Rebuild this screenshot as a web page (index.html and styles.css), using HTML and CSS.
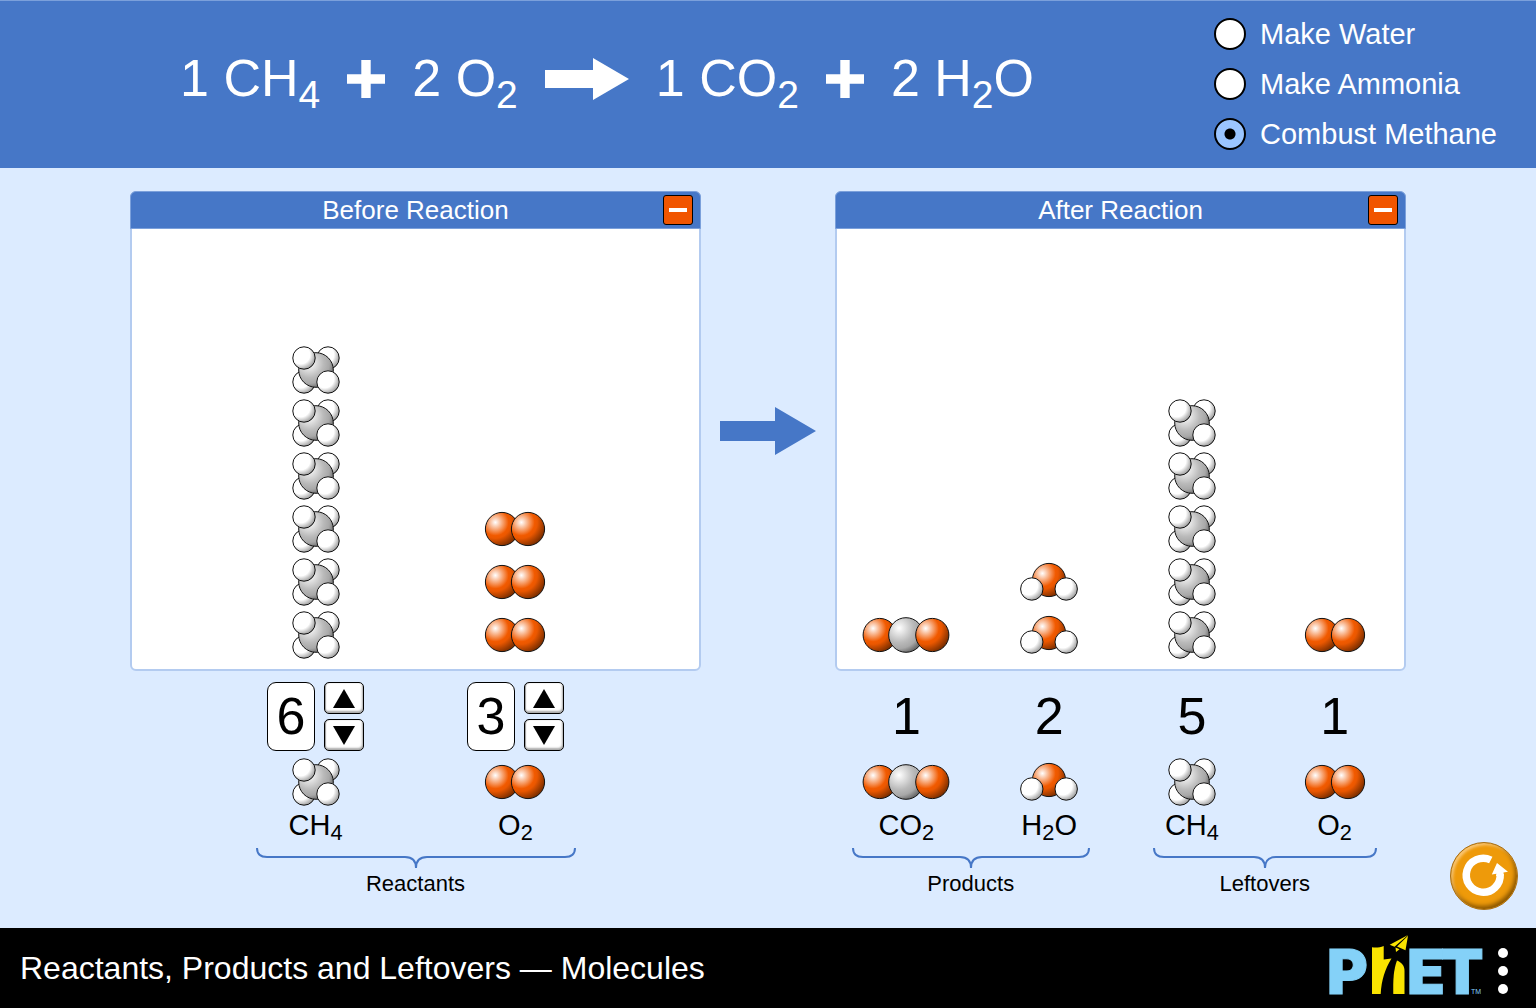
FILE: index.html
```html
<!DOCTYPE html>
<html lang="en">
<head>
<meta charset="utf-8">
<meta name="viewport" content="width=device-width, initial-scale=1">
<title>Reactants, Products and Leftovers — Molecules</title>
<link rel="stylesheet" href="styles.css">
</head>
<body>
<svg class="defs" aria-hidden="true">
  <defs>
    <radialGradient id="oxygen" cx="0.3" cy="0.3" r="0.8">
      <stop offset="0" stop-color="#fff"/>
      <stop offset="0.5" stop-color="#f15a00"/>
      <stop offset="0.6" stop-color="#ea5700"/>
      <stop offset="1" stop-color="#6a2800"/>
    </radialGradient>
    <radialGradient id="carbon" cx="0.3" cy="0.3" r="0.84">
      <stop offset="0" stop-color="#fff"/>
      <stop offset="0.5" stop-color="#bababa"/>
      <stop offset="0.7" stop-color="#a8a8a8"/>
      <stop offset="1" stop-color="#484848"/>
    </radialGradient>
    <radialGradient id="hydrogen" cx="0.35" cy="0.35" r="0.75">
      <stop offset="0" stop-color="#fff"/>
      <stop offset="0.55" stop-color="#fff"/>
      <stop offset="1" stop-color="#888"/>
    </radialGradient>
    <symbol id="ch4" viewBox="-50 -27 100 53">
      <circle class="h" cx="12" cy="-12" r="11.2"/>
      <circle class="h" cx="-12" cy="12" r="11.2"/>
      <circle class="c" r="17.3"/>
      <circle class="h" cx="-12" cy="-12" r="11.2"/>
      <circle class="h" cx="12" cy="12" r="11.2"/>
    </symbol>
    <symbol id="o2" viewBox="-50 -27 100 53">
      <circle class="o" cx="-13" r="16.6"/>
      <circle class="o" cx="13" r="16.6"/>
    </symbol>
    <symbol id="co2" viewBox="-50 -27 100 53">
      <circle class="o" cx="-26.3" r="16.6"/>
      <circle class="c" r="17.3"/>
      <circle class="o" cx="26.3" r="16.6"/>
    </symbol>
    <symbol id="h2o" viewBox="-50 -27 100 53">
      <circle class="o" cy="-2" r="16.6"/>
      <circle class="h" cx="-17.2" cy="7" r="11.2"/>
      <circle class="h" cx="17.2" cy="7" r="11.2"/>
    </symbol>
    <symbol id="plus" viewBox="0 0 38 38">
      <path d="M14.3 0h9.4v14.3H38v9.4H23.7V38h-9.4V23.7H0v-9.4h14.3z"/>
    </symbol>
  </defs>
</svg>

<header class="topbar">
  <div class="equation">
    <span class="term">1 CH<sub>4</sub></span>
    <svg class="plus" role="img" aria-label="plus"><use href="#plus"/></svg>
    <span class="term">2 O<sub>2</sub></span>
    <svg class="yields" viewBox="0 0 84 42" role="img" aria-label="yields"><path d="M0 12h48V0l36 21-36 21V30H0z"/></svg>
    <span class="term">1 CO<sub>2</sub></span>
    <svg class="plus" role="img" aria-label="plus"><use href="#plus"/></svg>
    <span class="term">2 H<sub>2</sub>O</span>
  </div>
  <form class="reactions">
    <label class="reaction"><input type="radio" name="reaction"><span>Make Water</span></label>
    <label class="reaction"><input type="radio" name="reaction"><span>Make Ammonia</span></label>
    <label class="reaction"><input type="radio" name="reaction" checked><span>Combust Methane</span></label>
  </form>
</header>

<main class="stage">
  <div class="board">
    <section class="panel">
      <div class="panel-head">
        <h2>Before Reaction</h2>
        <button class="collapse" type="button" aria-label="Collapse Before Reaction"></button>
      </div>
      <div class="stacks stacks-two">
        <div class="stack">
          <svg class="molecule"><use href="#ch4"/></svg>
          <svg class="molecule"><use href="#ch4"/></svg>
          <svg class="molecule"><use href="#ch4"/></svg>
          <svg class="molecule"><use href="#ch4"/></svg>
          <svg class="molecule"><use href="#ch4"/></svg>
          <svg class="molecule"><use href="#ch4"/></svg>
        </div>
        <div class="stack">
          <svg class="molecule"><use href="#o2"/></svg>
          <svg class="molecule"><use href="#o2"/></svg>
          <svg class="molecule"><use href="#o2"/></svg>
        </div>
      </div>
    </section>

    <svg class="between" viewBox="0 0 96 48" aria-hidden="true"><path d="M0 14h55V0l41 24-41 24V34H0z"/></svg>

    <section class="panel">
      <div class="panel-head">
        <h2>After Reaction</h2>
        <button class="collapse" type="button" aria-label="Collapse After Reaction"></button>
      </div>
      <div class="stacks stacks-four">
        <div class="stack">
          <svg class="molecule"><use href="#co2"/></svg>
        </div>
        <div class="stack">
          <svg class="molecule"><use href="#h2o"/></svg>
          <svg class="molecule"><use href="#h2o"/></svg>
        </div>
        <div class="stack">
          <svg class="molecule"><use href="#ch4"/></svg>
          <svg class="molecule"><use href="#ch4"/></svg>
          <svg class="molecule"><use href="#ch4"/></svg>
          <svg class="molecule"><use href="#ch4"/></svg>
          <svg class="molecule"><use href="#ch4"/></svg>
        </div>
        <div class="stack">
          <svg class="molecule"><use href="#o2"/></svg>
        </div>
      </div>
    </section>

    <div class="ledger">
      <div class="group">
        <div class="items stacks-two">
          <div class="item">
            <div class="stepper">
              <output class="value">6</output>
              <div class="arrows">
                <button type="button" aria-label="Add CH4"><svg viewBox="0 0 22 19"><path d="M11 0l11 19H0z"/></svg></button>
                <button type="button" aria-label="Remove CH4"><svg viewBox="0 0 22 19"><path d="M11 19L0 0h22z"/></svg></button>
              </div>
            </div>
            <svg class="molecule"><use href="#ch4"/></svg>
            <span class="formula">CH<sub>4</sub></span>
          </div>
          <div class="item">
            <div class="stepper">
              <output class="value">3</output>
              <div class="arrows">
                <button type="button" aria-label="Add O2"><svg viewBox="0 0 22 19"><path d="M11 0l11 19H0z"/></svg></button>
                <button type="button" aria-label="Remove O2"><svg viewBox="0 0 22 19"><path d="M11 19L0 0h22z"/></svg></button>
              </div>
            </div>
            <svg class="molecule"><use href="#o2"/></svg>
            <span class="formula">O<sub>2</sub></span>
          </div>
        </div>
        <div class="bracket">
          <svg width="320" height="21" viewBox="0 0 320 21"><path d="M1 0Q1 9 11 9H149Q160 9 160 20Q160 9 171 9H309Q319 9 319 0"/></svg>
          <span>Reactants</span>
        </div>
      </div>
    </div>

    <div class="ledger ledger-after">
      <div class="group">
        <div class="items">
          <div class="item">
            <output class="count">1</output>
            <svg class="molecule"><use href="#co2"/></svg>
            <span class="formula">CO<sub>2</sub></span>
          </div>
          <div class="item">
            <output class="count">2</output>
            <svg class="molecule"><use href="#h2o"/></svg>
            <span class="formula">H<sub>2</sub>O</span>
          </div>
        </div>
        <div class="bracket bracket-products">
          <svg width="238" height="21" viewBox="0 0 238 21"><path d="M1 0Q1 9 11 9H108Q119 9 119 20Q119 9 130 9H227Q237 9 237 0"/></svg>
          <span>Products</span>
        </div>
      </div>
      <div class="group">
        <div class="items">
          <div class="item">
            <output class="count">5</output>
            <svg class="molecule"><use href="#ch4"/></svg>
            <span class="formula">CH<sub>4</sub></span>
          </div>
          <div class="item">
            <output class="count">1</output>
            <svg class="molecule"><use href="#o2"/></svg>
            <span class="formula">O<sub>2</sub></span>
          </div>
        </div>
        <div class="bracket bracket-leftovers">
          <svg width="224" height="21" viewBox="0 0 224 21"><path d="M1 0Q1 9 11 9H101Q112 9 112 20Q112 9 123 9H213Q223 9 223 0"/></svg>
          <span>Leftovers</span>
        </div>
      </div>
    </div>
  </div>

  <button class="reset" type="button" aria-label="Reset all">
    <svg viewBox="0 0 66 66">
      <path class="ring" d="M39.8 17A17 17 0 1 0 49.2 31"/>
      <path class="tip" d="M46 20L57 28.8L52.5 29.5V33H45L45.5 30.7L40.8 31.4Z"/>
    </svg>
  </button>
</main>

<footer class="navbar">
  <h1>Reactants, Products and Leftovers — Molecules</h1>
  <div class="brand">
    <svg class="logo" viewBox="-6 0 164 80" role="img" aria-label="PhET">
      <text class="letters" x="-3" y="66">P</text>
      <text class="letters" x="77" y="66">E</text>
      <text class="letters" x="111" y="66">T</text>
      <path class="yellow" d="M42 19.3C46 20 50 19.5 53.7 18V31.6L61.5 30.5C55 41 51.5 52 50.7 66H42Z"/>
      <path class="yellow" d="M67 32.5C71.5 34.5 74.5 37.5 74.5 43V66H63.3C63 52 63.5 42 67 32.5Z"/>
      <path class="yellow" d="M78 7L59.7 16.7L64.5 18.7ZM78 7.8L67 18.6L75.5 22.3ZM65.5 19.5L66 24L69.6 21.2Z"/>
      <text class="tm" x="141" y="66">TM</text>
    </svg>
    <button class="menu" type="button" aria-label="Menu"><i></i><i></i><i></i></button>
  </div>
</footer>
</body>
</html>
```

FILE: styles.css
```css
* {
  box-sizing: border-box;
}

body {
  margin: 0;
  min-height: 100vh;
  display: flex;
  flex-direction: column;
  background: #dcebff;
  color: #000;
  font-family: Arial, "Liberation Sans", sans-serif;
}

h1,
h2 {
  margin: 0;
  font-weight: 400;
}

button {
  padding: 0;
  font: inherit;
  cursor: pointer;
}

svg {
  display: block;
}

sub {
  font-size: 75%;
  line-height: 0;
}

.defs {
  position: absolute;
  width: 0;
  height: 0;
}

/* Header: equation and reaction choices */

.topbar {
  display: flex;
  align-items: center;
  padding: 17px 39px 18px 0;
  background: #4677c7;
  border-top: 1px solid #7ba0db;
  color: #fff;
}

.equation {
  flex: 1;
  display: flex;
  justify-content: center;
  align-items: center;
  gap: 27px;
  padding-bottom: 10px;
  fill: #fff;
}

.term {
  padding-bottom: 2px;
  font-size: 52px;
  line-height: 58px;
  white-space: nowrap;
}

.term sub {
  vertical-align: -12px;
}

.plus {
  width: 38px;
  height: 38px;
}

.yields {
  width: 84px;
  height: 42px;
}

.reactions {
  display: flex;
  flex-direction: column;
  gap: 18px;
}

.reaction {
  display: flex;
  align-items: center;
  gap: 14px;
  font-size: 29px;
  line-height: 32px;
}

.reaction input {
  appearance: none;
  flex: none;
  width: 32px;
  height: 32px;
  margin: 0;
  border: 2px solid #000;
  border-radius: 50%;
  background: #fff;
}

.reaction input:checked {
  background: radial-gradient(circle, #000 5px, #9bc5ff 6px);
}

/* Board: two panels above their ledgers */

.stage {
  position: relative;
  flex: 1;
  display: flex;
  justify-content: center;
  padding: 23px 24px 31px;
}

.board {
  flex: 1;
  max-width: 1276px;
  display: grid;
  grid-template-columns: 1fr 134px 1fr;
  grid-template-rows: 1fr auto;
}

.panel {
  display: flex;
  flex-direction: column;
  border: 2px solid #b3cbf0;
  border-radius: 6px;
  background: #fff;
}

.panel-head {
  display: grid;
  grid-template-columns: 1fr auto 1fr;
  align-items: center;
  height: 38px;
  margin: -2px -2px 0;
  padding: 0 7px;
  border: 1px solid #7ba0db;
  border-radius: 6px 6px 0 0;
  background: #4677c7;
  color: #fff;
}

.panel-head h2 {
  grid-column: 2;
  font-size: 26px;
  line-height: 30px;
}

.collapse {
  justify-self: end;
  display: grid;
  place-items: center;
  width: 30px;
  height: 30px;
  border: 1px solid #000;
  border-radius: 3px;
  background: #f15500;
}

.collapse::before {
  content: "";
  width: 18px;
  height: 4px;
  background: #fff;
}

.stacks {
  flex: 1;
  display: grid;
  align-items: end;
  margin: 0 -2px;
  padding: 8px 0;
}

.stacks-two {
  grid-template-columns: 35% 35%;
  justify-content: center;
}

.stacks-four {
  grid-template-columns: repeat(4, 1fr);
}

.stack {
  display: flex;
  flex-direction: column;
  align-items: center;
}

.molecule {
  width: 100px;
  height: 53px;
}

.o,
.c,
.h {
  stroke: #111;
  stroke-width: 1;
}

.o {
  fill: url(#oxygen);
}

.c {
  fill: url(#carbon);
}

.h {
  fill: url(#hydrogen);
}

.between {
  align-self: center;
  justify-self: center;
  width: 96px;
  height: 48px;
  fill: #4677c7;
}

.ledger {
  margin-top: 11px;
}

.ledger-after {
  grid-column: 3;
  display: grid;
  grid-template-columns: 1fr 1fr;
}

.items {
  display: grid;
  grid-template-columns: 1fr 1fr;
}

.items.stacks-two {
  grid-template-columns: 35% 35%;
}

.item {
  display: flex;
  flex-direction: column;
  align-items: center;
}

.stepper {
  display: flex;
  gap: 9px;
  margin-bottom: 4px;
}

.value,
.count {
  height: 69px;
  font-size: 52px;
  line-height: 68px;
  text-align: center;
}

.value {
  width: 48px;
  border: 1px solid #000;
  border-radius: 9px;
  background: #fff;
  line-height: 66px;
}

.count {
  margin-bottom: 4px;
}

.arrows {
  display: flex;
  flex-direction: column;
  justify-content: space-between;
}

.arrows button {
  display: grid;
  place-items: center;
  width: 40px;
  height: 32px;
  border: 1px solid #000;
  border-radius: 5px;
  background: #fff;
  box-shadow: inset -1px -2px 2px #aaa, inset 1px 0 1px #999;
}

.arrows svg {
  width: 22px;
  height: 19px;
}

.formula {
  font-size: 29px;
  line-height: 34px;
}

.formula sub {
  vertical-align: -5px;
}

.bracket {
  display: flex;
  flex-direction: column;
  align-items: center;
  gap: 2px;
  padding-top: 6px;
  font-size: 22px;
  line-height: 26px;
}

.bracket-products {
  padding-right: 14px;
}

.bracket-leftovers {
  padding-left: 3px;
}

.bracket path {
  fill: none;
  stroke: #4677c7;
  stroke-width: 2;
}

.reset {
  position: absolute;
  right: 18px;
  bottom: 18px;
  width: 68px;
  height: 68px;
  border: 1px solid #a87018;
  border-radius: 50%;
  background: #ee9a0a;
  box-shadow: inset -2px -3px 4px #8a5600, inset 2px 2px 3px #fbc979;
}

.reset svg {
  width: 66px;
  height: 66px;
}

.ring {
  fill: none;
  stroke: #fff;
  stroke-width: 7.5;
}

.tip {
  fill: #fff;
}

/* Navigation bar */

.navbar {
  display: flex;
  justify-content: space-between;
  align-items: center;
  height: 80px;
  padding: 0 28px 0 20px;
  background: #000;
  color: #fff;
}

.navbar h1 {
  font-size: 32px;
  line-height: 40px;
}

.brand {
  display: flex;
  align-items: center;
  gap: 10px;
}

.logo {
  width: 164px;
  height: 80px;
}

.letters {
  font-family: Inter, sans-serif;
  font-size: 62px;
  font-weight: 900;
  fill: #84d1f8;
  stroke: #84d1f8;
  stroke-width: 1;
}

.yellow {
  fill: #f9e300;
}

.tm {
  font-size: 7px;
  fill: #84d1f8;
}

.menu {
  display: flex;
  flex-direction: column;
  justify-content: space-between;
  height: 46px;
  margin-top: 6px;
  border: 0;
  background: none;
}

.menu i {
  width: 10px;
  height: 10px;
  border-radius: 50%;
  background: #fff;
}
```
